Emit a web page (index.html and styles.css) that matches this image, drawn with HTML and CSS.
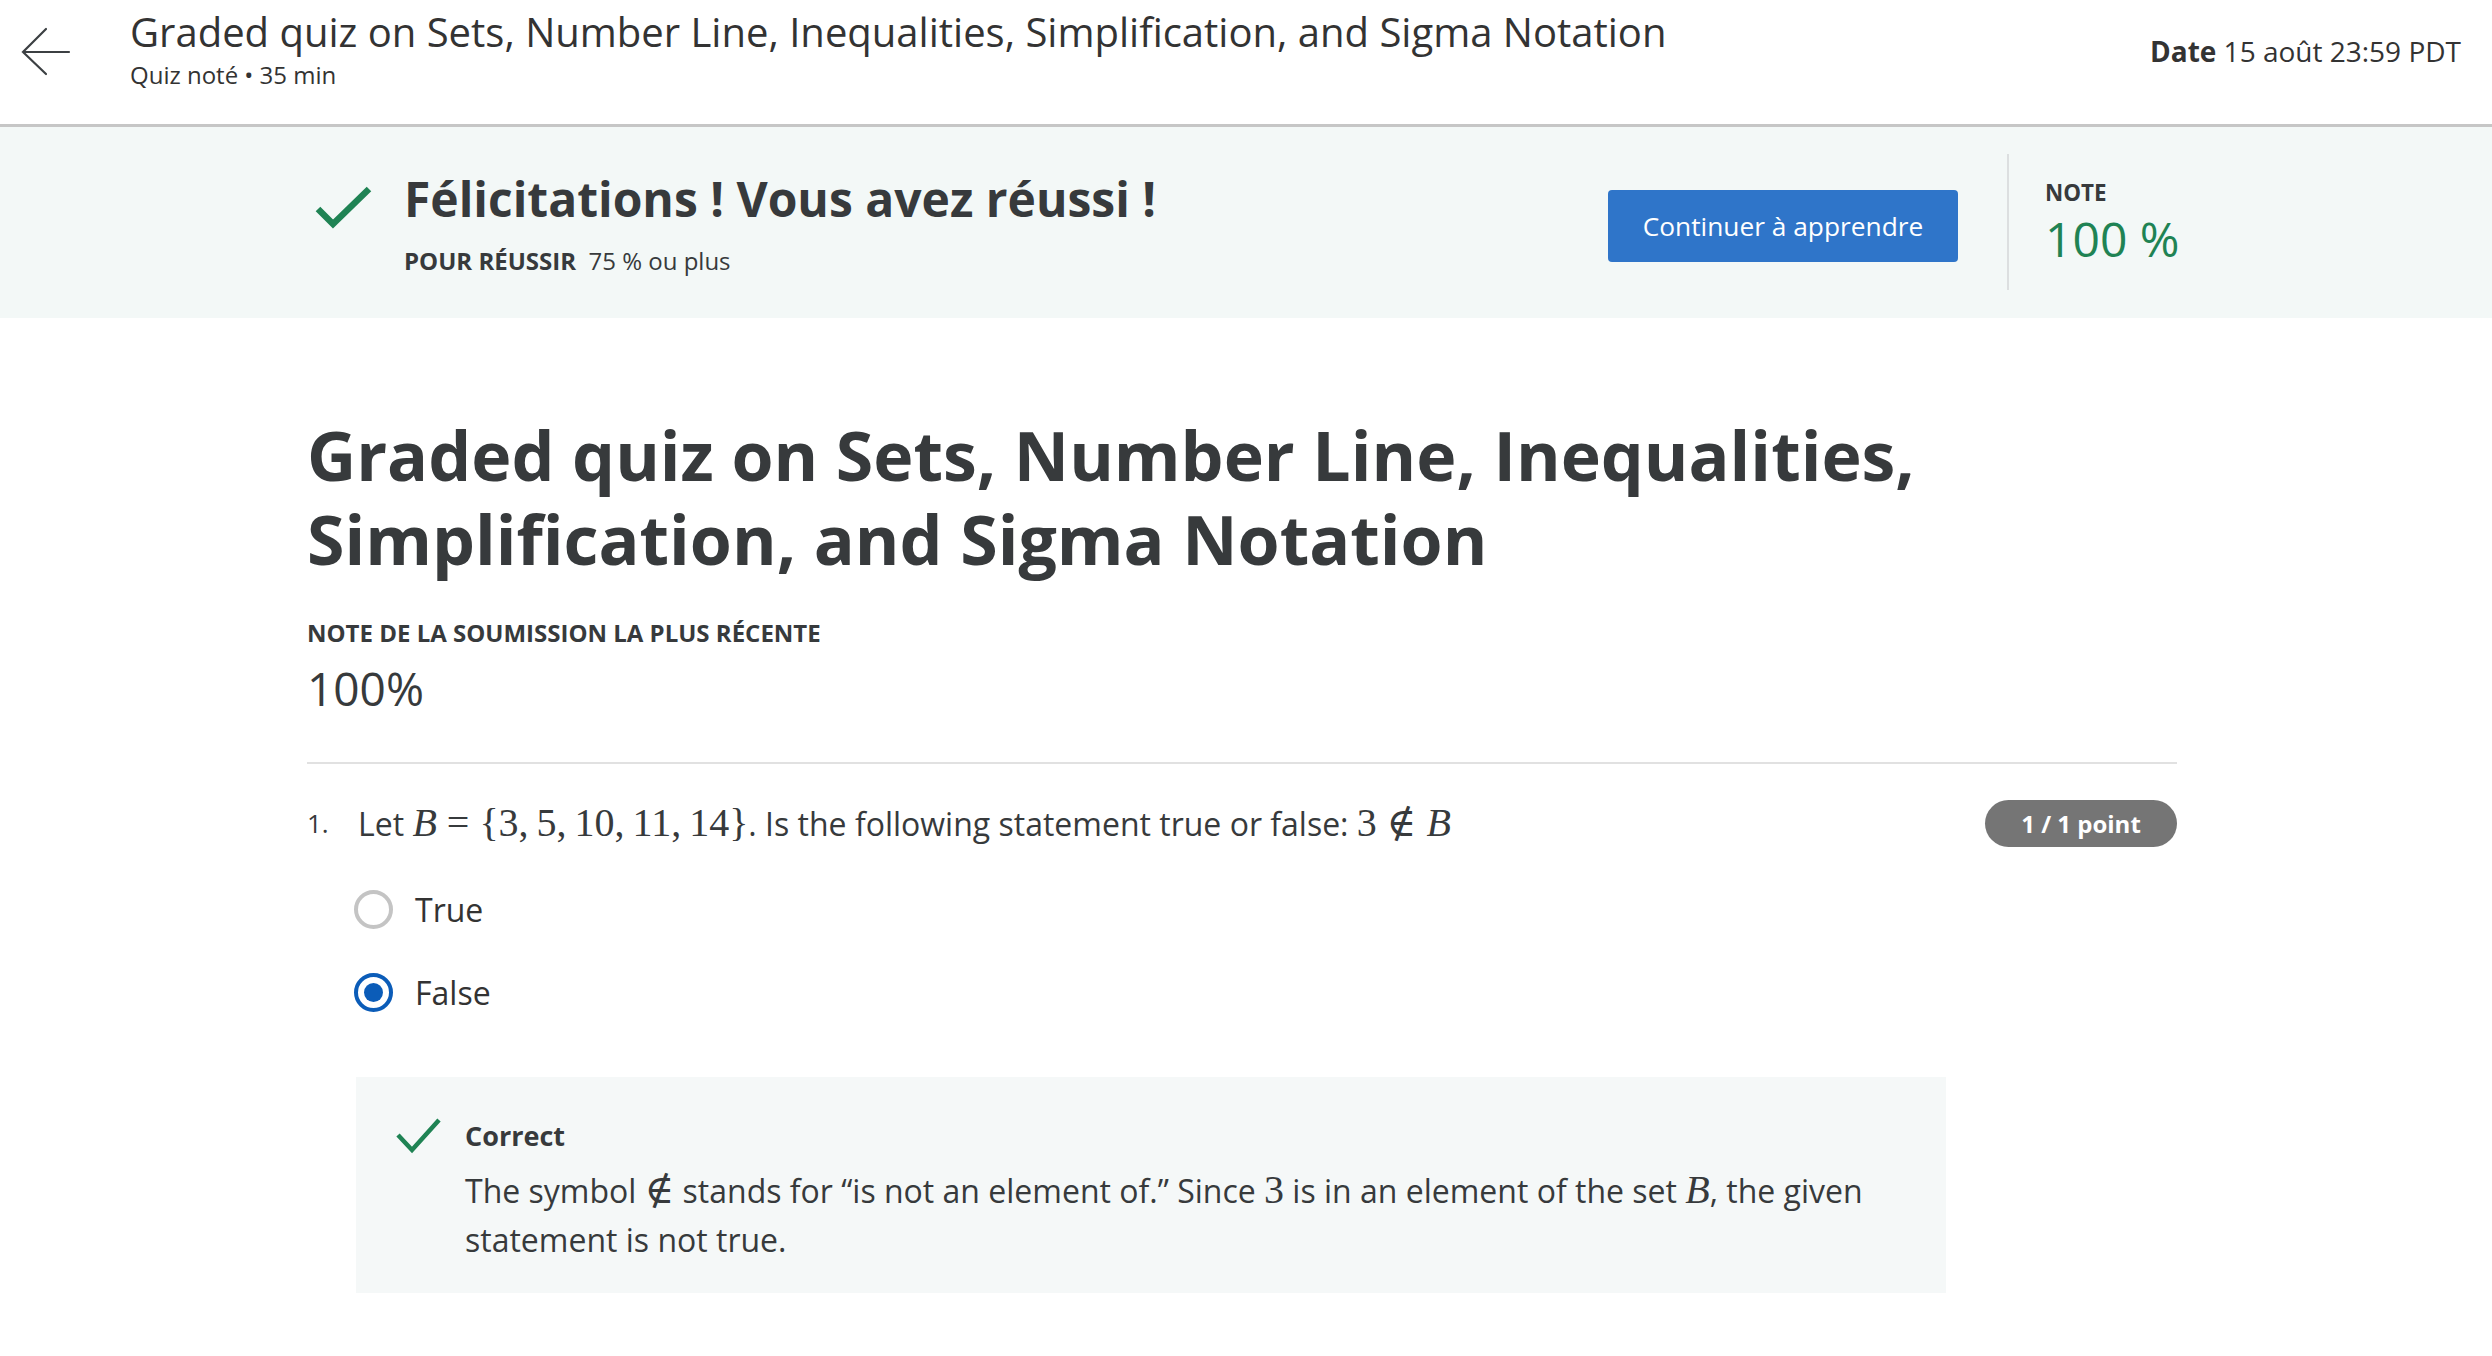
FILE: index.html
```html
<!DOCTYPE html>
<html lang="fr">
<head>
<meta charset="utf-8">
<title>Graded quiz</title>
<link rel="stylesheet" href="styles.css">
</head>
<body>
<header class="topbar">
  <svg class="back" width="52" height="52" viewBox="0 0 52 52" aria-hidden="true">
    <path d="M3 26 H49 M26 3 L3 26 L26 48" fill="none" stroke="#3c4043" stroke-width="2.2" stroke-linecap="round" stroke-linejoin="miter"/>
  </svg>
  <div class="top-titles">
    <div class="top-title">Graded quiz on Sets, Number Line, Inequalities, Simplification, and Sigma Notation</div>
    <div class="top-sub">Quiz noté • 35 min</div>
  </div>
  <div class="top-date"><b>Date</b> 15 août 23:59 PDT</div>
</header>

<section class="banner">
  <div class="banner-inner">
    <svg class="banner-check" width="58" height="44" viewBox="0 0 58 44" aria-hidden="true">
      <polyline points="4,24 19,39 55,4" fill="none" stroke="#1f8354" stroke-width="6.5"/>
    </svg>
    <div class="banner-text">
      <div class="congrats">Félicitations ! Vous avez réussi !</div>
      <div class="pass"><b>POUR RÉUSSIR</b>&nbsp; 75 % ou plus</div>
    </div>
    <div class="banner-btn">Continuer à apprendre</div>
    <div class="banner-divider"></div>
    <div class="banner-note">
      <div class="note-label">NOTE</div>
      <div class="note-value">100 %</div>
    </div>
  </div>
</section>

<main class="content">
  <h1 class="quiz-title">Graded quiz on Sets, Number Line, Inequalities, Simplification, and Sigma Notation</h1>
  <div class="recent-label">NOTE DE LA SOUMISSION LA PLUS RÉCENTE</div>
  <div class="recent-value">100%</div>
  <hr class="rule">

  <div class="question">
    <div class="q-num">1.</div>
    <div class="q-text">Let <span class="m"><i>B</i> = {3,&thinsp;5,&thinsp;10,&thinsp;11,&thinsp;14}</span>. Is the following statement true or false: <span class="m">3 ∉ <i>B</i></span></div>
    <div class="badge">1 / 1 point</div>
  </div>

  <div class="options">
    <div class="option"><span class="radio"></span><span class="opt-label">True</span></div>
    <div class="option"><span class="radio radio-on"><span class="dot"></span></span><span class="opt-label">False</span></div>
  </div>

  <div class="feedback">
    <svg class="fb-check" width="46" height="36" viewBox="0 0 46 36" aria-hidden="true">
      <polyline points="2,17 16,32 43,2" fill="none" stroke="#1f8354" stroke-width="4.5"/>
    </svg>
    <div class="fb-body">
      <div class="fb-title">Correct</div>
      <div class="fb-text">The symbol <span class="m">∉</span> stands for “is not an element of.” Since <span class="m">3</span> is in an element of the set <span class="m"><i>B</i></span>, the given statement is not true.</div>
    </div>
  </div>
</main>
</body>
</html>
```

FILE: styles.css
```css
* { box-sizing: border-box; }
html, body { margin: 0; padding: 0; background: #fff; }
body {
  font-family: "Open Sans", "Noto Sans", sans-serif;
  color: #373a3c;
}

/* top bar */
.topbar {
  height: 127px;
  border-bottom: 3px solid #c6c6c6;
  display: flex;
  align-items: flex-start;
}
.back { margin: 26px 0 0 20px; flex: none; }
.top-titles { margin-left: 58px; padding-top: 8px; flex: 1; }
.top-title { font-size: 40px; line-height: 48px; color: #333; white-space: nowrap; }
.top-sub { font-size: 24px; line-height: 33.6px; margin-top: 2px; color: #333; }
.top-date { font-size: 28px; line-height: 43px; padding-top: 30px; padding-right: 31px; color: #333; white-space: nowrap; }
.top-date b { font-weight: 700; }

/* banner */
.banner { background: #f3f8f7; height: 191px; }
.banner-inner {
  width: 1870px;
  margin-left: 307px;
  display: flex;
  align-items: flex-start;
}
.banner-check { margin: 58px 0 0 7px; flex: none; }
.banner-text { margin: 43px 0 0 32px; flex: 1; }
.congrats { font-size: 48px; line-height: 58px; font-weight: 700; color: #373a3c; white-space: nowrap; }
.pass { font-size: 24px; line-height: 33.6px; margin-top: 16px; color: #373a3c; }
.pass b { font-weight: 700; }
.banner-btn {
  margin-top: 63px;
  width: 350px;
  height: 72px;
  background: #2f75c9;
  color: #fff;
  border-radius: 4px;
  font-size: 26.3px;
  display: flex;
  align-items: center;
  justify-content: center;
  flex: none;
}
.banner-divider { width: 2px; height: 136px; margin: 27px 0 0 49px; background: #dcdfe0; flex: none; }
.banner-note { width: 132px; margin: 49px 0 0 36px; flex: none; }
.note-label { font-size: 22.4px; line-height: 33.6px; font-weight: 700; color: #373a3c; }
.note-value { font-size: 48px; line-height: 57.6px; color: #1f8354; white-space: nowrap; }

/* content */
.content { width: 1870px; margin-left: 307px; }
.quiz-title {
  margin: 95px 0 0 0;
  font-size: 68px;
  line-height: 84px;
  font-weight: 700;
  color: #373a3c;
}
.recent-label { margin-top: 34.5px; font-size: 24px; line-height: 33.6px; font-weight: 700; color: #373a3c; }
.recent-value { margin-top: 9px; font-size: 46px; line-height: 60px; color: #373a3c; }
.rule { margin: 44px 0 0 0; border: 0; height: 2px; background: #e1e1e1; }

.question { display: flex; align-items: center; margin-top: 35.5px; }
.q-num { width: 51px; font-size: 26px; line-height: 43px; color: #373a3c; flex: none; }
.q-text { flex: 1; font-size: 32px; line-height: 43px; color: #373a3c; }
.m { font-family: "Liberation Serif", "DejaVu Serif", serif; font-size: 1.25em; line-height: 1; }
.m i { font-style: italic; }
.badge {
  flex: none;
  width: 192px;
  height: 47px;
  border-radius: 24px;
  background: #757575;
  color: #fff;
  font-weight: 700;
  font-size: 24px;
  display: flex;
  align-items: center;
  justify-content: center;
}

.options { margin-top: 33px; padding-left: 47px; display: flex; flex-direction: column; gap: 23px; }
.option { height: 60px; display: flex; align-items: center; }
.radio {
  width: 39px;
  height: 39px;
  border-radius: 50%;
  border: 4px solid #c4c4c4;
  display: flex;
  align-items: center;
  justify-content: center;
  flex: none;
}
.radio-on { border-color: #0b5cb8; }
.dot { width: 19px; height: 19px; border-radius: 50%; background: #0b5cb8; }
.opt-label { margin-left: 22px; font-size: 32px; color: #333; }

.feedback {
  margin: 54px 0 0 49px;
  width: 1590px;
  height: 216px;
  background: #f5f8f8;
  display: flex;
  align-items: flex-start;
  padding: 40px 0 0 40px;
}
.fb-check { flex: none; margin-top: 1px; }
.fb-body { margin-left: 23px; }
.fb-title { font-size: 27px; line-height: 38px; font-weight: 700; color: #373a3c; }
.fb-text { margin-top: 11px; font-size: 32px; line-height: 49px; color: #373a3c; width: 1450px; }
```
